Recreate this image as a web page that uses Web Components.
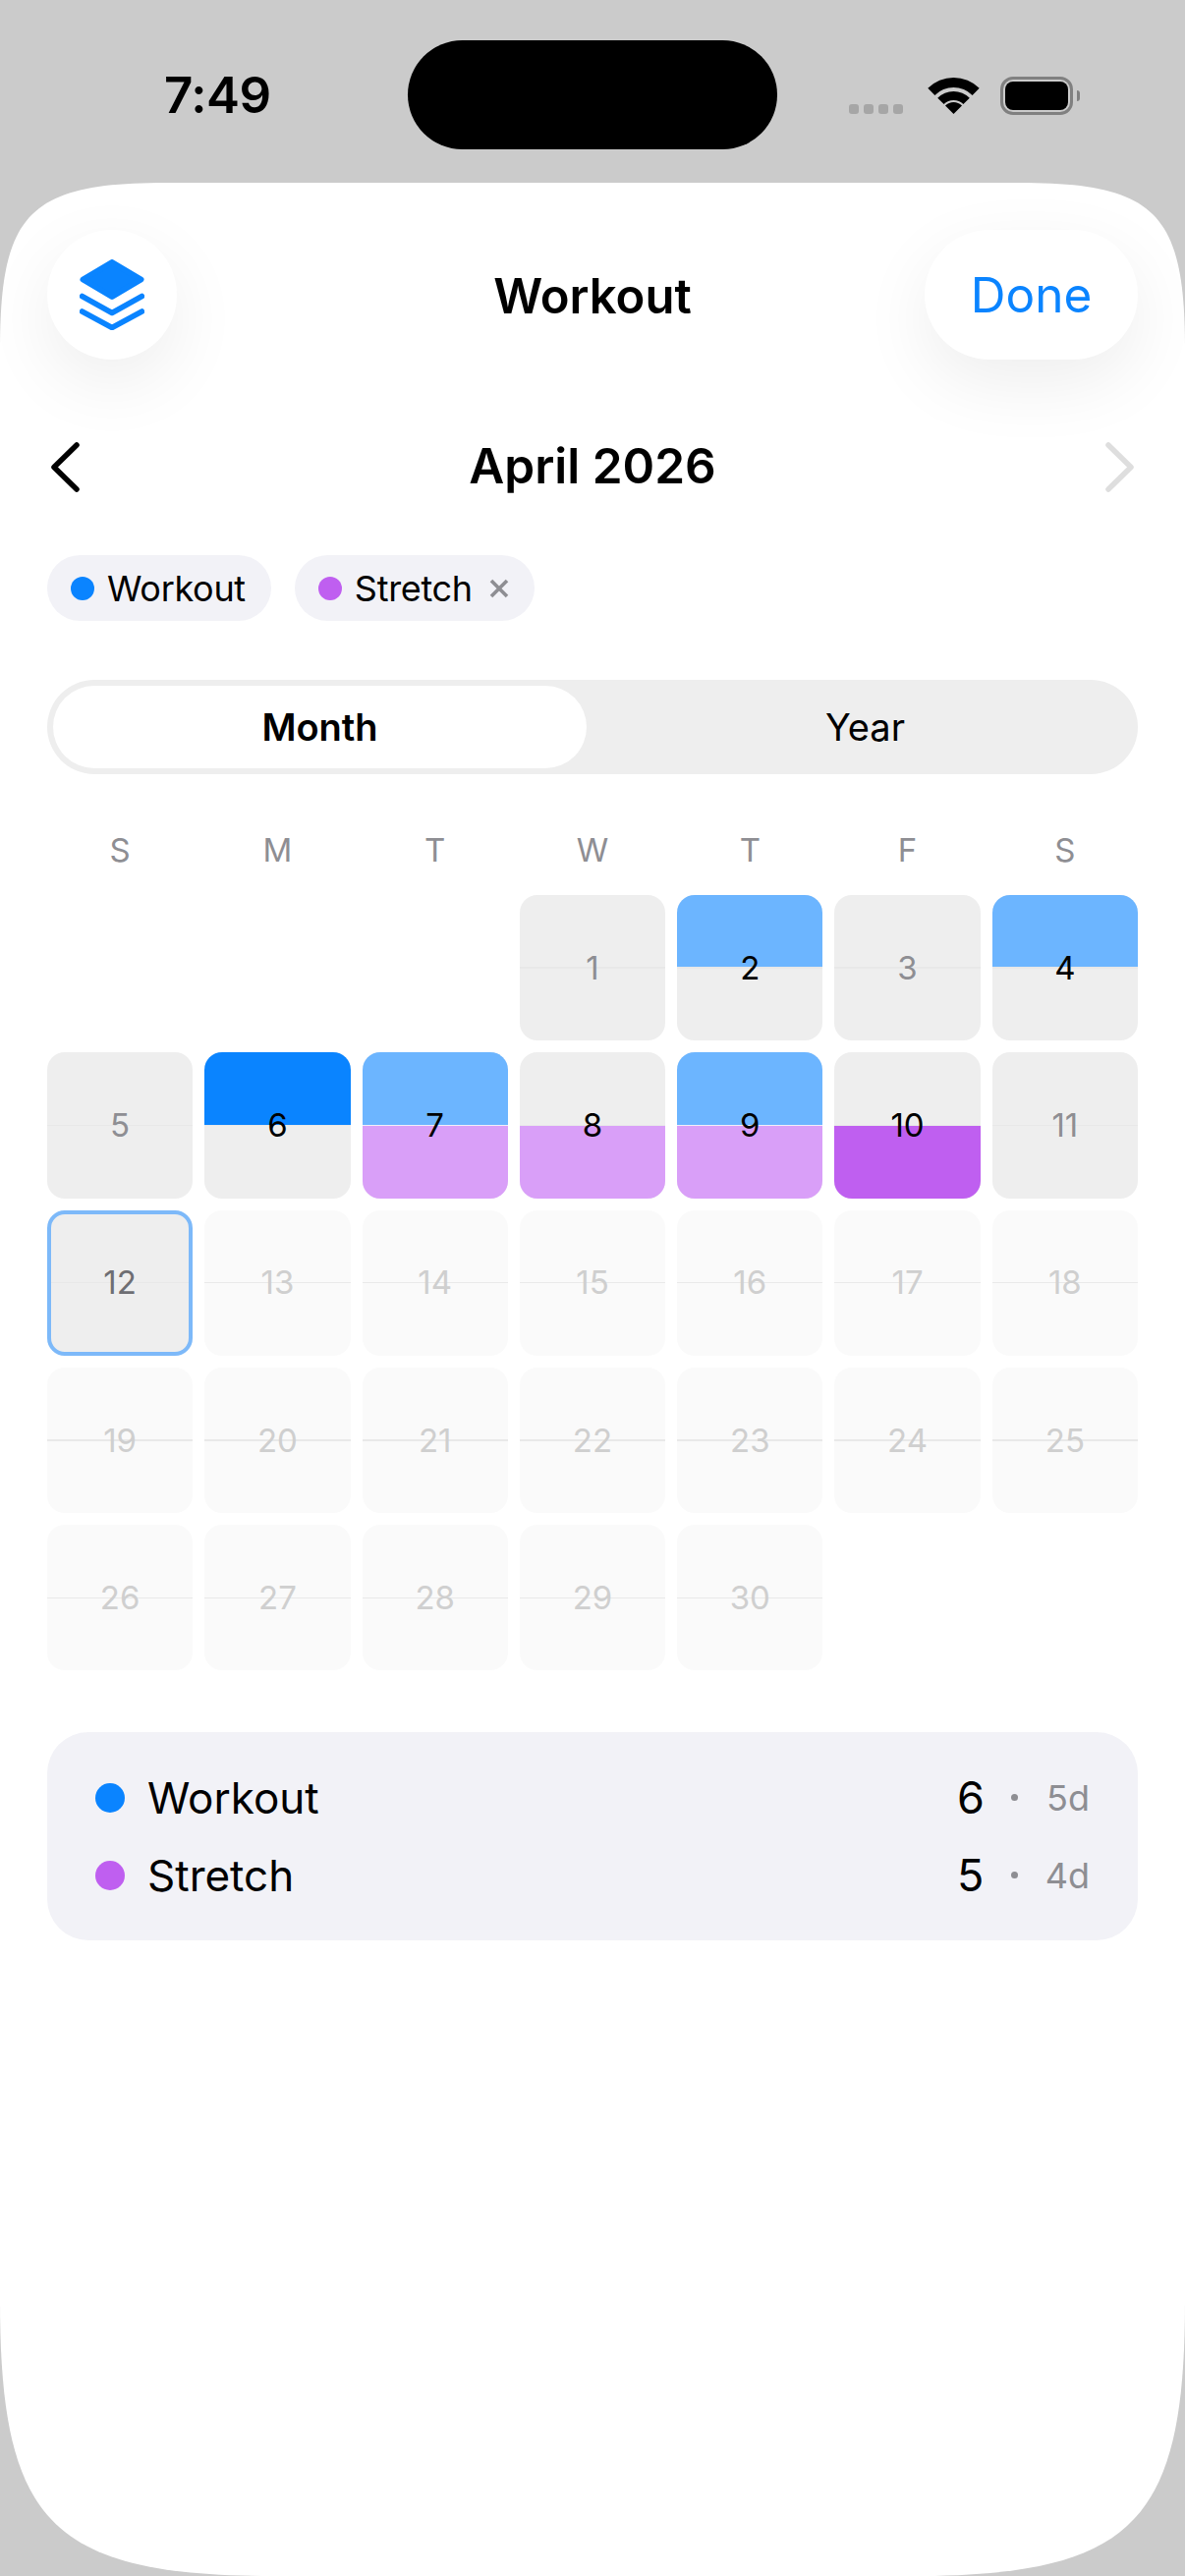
<!DOCTYPE html>
<html lang="en">
<head>
<meta charset="utf-8">
<title>Workout</title>
<style>
  html, body { margin: 0; background: #cbcbcb; }
  body { width: 1206px; height: 2622px; overflow: hidden; font-family: Inter, "Liberation Sans", sans-serif; color: #000; }
</style>
</head>
<body>
<status-bar time="7:49"></status-bar>
<sheet-panel>
  <sheet-header title="Workout" action="Done"></sheet-header>
  <month-nav label="April 2026"></month-nav>
  <chip-row>
    <filter-chip color="#0a84ff">Workout</filter-chip>
    <filter-chip color="#bf5ff0" removable>Stretch</filter-chip>
  </chip-row>
  <segment-switch first="Month" second="Year"></segment-switch>
  <calendar-grid>
    <day-cell></day-cell><day-cell></day-cell><day-cell></day-cell>
    <day-cell day="1" state="past"></day-cell>
    <day-cell day="2" state="past" top="#6cb5ff"></day-cell>
    <day-cell day="3" state="past"></day-cell>
    <day-cell day="4" state="past" top="#6cb5ff"></day-cell>
    <day-cell day="5" state="past"></day-cell>
    <day-cell day="6" state="past" top="#0a84ff"></day-cell>
    <day-cell day="7" state="past" top="#6cb5ff" bottom="#d99ff8"></day-cell>
    <day-cell day="8" state="past" bottom="#d99ff8"></day-cell>
    <day-cell day="9" state="past" top="#6cb5ff" bottom="#d99ff8"></day-cell>
    <day-cell day="10" state="past" bottom="#bf5ff0"></day-cell>
    <day-cell day="11" state="past"></day-cell>
    <day-cell day="12" state="today"></day-cell>
    <day-cell day="13"></day-cell><day-cell day="14"></day-cell><day-cell day="15"></day-cell>
    <day-cell day="16"></day-cell><day-cell day="17"></day-cell><day-cell day="18"></day-cell>
    <day-cell day="19"></day-cell><day-cell day="20"></day-cell><day-cell day="21"></day-cell>
    <day-cell day="22"></day-cell><day-cell day="23"></day-cell><day-cell day="24"></day-cell>
    <day-cell day="25"></day-cell><day-cell day="26"></day-cell><day-cell day="27"></day-cell>
    <day-cell day="28"></day-cell><day-cell day="29"></day-cell><day-cell day="30"></day-cell>
  </calendar-grid>
  <legend-card>
    <legend-row color="#0a84ff" label="Workout" count="6" days="5d"></legend-row>
    <legend-row color="#bf5ff0" label="Stretch" count="5" days="4d"></legend-row>
  </legend-card>
</sheet-panel>

<script>
class StatusBar extends HTMLElement {
  connectedCallback() {
    this.attachShadow({ mode: "open" }).innerHTML = `
    <style>
      :host { display: grid; grid-template-columns: 415px 376px 1fr; height: 186px; box-sizing: border-box; padding-top: 41px; }
      .time { padding-left: 167px; font: 600 51px/112px Inter, sans-serif; letter-spacing: -0.5px; }
      .island { height: 111px; background: #000; border-radius: 56px; }
      .right { display: flex; align-items: flex-start; padding: 37px 0 0 73px; }
      .signal { display: flex; gap: 5px; margin-top: 28px; }
      .signal i { width: 10px; height: 10px; border-radius: 3px; background: #a6a6a6; }
      svg { display: block; overflow: visible; margin: 1px 0 0 26px; }
      .battery { display: flex; align-items: center; margin-left: 22px; }
      .shell { width: 74px; height: 39px; box-sizing: border-box; border: 3px solid #808080; border-radius: 13px; padding: 2px; }
      .shell b { display: block; height: 100%; border-radius: 8px; background: #000; }
      .nub { width: 3px; height: 11px; margin-left: 4px; border-radius: 0 3px 3px 0; background: #808080; }
    </style>
    <div class="time">${this.getAttribute("time")}</div>
    <div class="island"></div>
    <div class="right">
      <div class="signal"><i></i><i></i><i></i><i></i></div>
      <svg width="51" height="37" viewBox="0 0 51 37" fill="#000">
        <path d="M-.7 10.8A37 37 0 0 1 51.7 10.8L44.6 17.9A27 27 0 0 0 6.4 17.9Z"/>
        <path d="M9.2 20.7A23 23 0 0 1 41.8 20.7L35.4 27.1A14 14 0 0 0 15.6 27.1Z"/>
        <path d="M17 28.5A12 12 0 0 1 34 28.5L25.5 37Z"/>
      </svg>
      <div class="battery"><div class="shell"><b></b></div><div class="nub"></div></div>
    </div>`;
  }
}

class SheetPanel extends HTMLElement {
  connectedCallback() {
    this.attachShadow({ mode: "open" }).innerHTML = `
    <style>
      :host { display: block; height: 2436px; box-sizing: border-box; padding: 48px 48px 0; background: #fff;
        clip-path: path("M0 170C0 30 30 0 170 0L1036 0C1176 0 1206 30 1206 170L1206 2156C1206 2383 1153 2436 926 2436L280 2436C53 2436 0 2383 0 2156Z"); }
    </style>
    <slot></slot>`;
  }
}

class SheetHeader extends HTMLElement {
  connectedCallback() {
    this.attachShadow({ mode: "open" }).innerHTML = `
    <style>
      :host { display: grid; grid-template-columns: 1fr auto 1fr; align-items: center; height: 132px; }
      .btn { height: 132px; background: #fff; border-radius: 66px; box-shadow: 0 24px 72px rgba(0,0,0,.07);
        display: flex; align-items: center; justify-content: center; }
      .icon { width: 132px; }
      .done { width: 217px; box-sizing: border-box; padding-top: 2px; justify-self: end; color: #0a84ff; font: 400 49.5px/1 Inter, sans-serif; }
      h1 { margin: 0; padding-top: 2px; font: 570 49px/1 Inter, sans-serif; }
    </style>
    <div class="btn icon">
      <svg width="66" height="72" viewBox="0 0 66 72">
        <polygon points="33,3 62.5,20.5 33,38 3.5,20.5" fill="#0a84ff" stroke="#0a84ff" stroke-width="6" stroke-linejoin="round"/>
        <path d="M2.5 37.5L33 54.5L63.5 37.5M2.5 53L33 69.5L63.5 53" fill="none" stroke="#0a84ff" stroke-width="5.5" stroke-linecap="round" stroke-linejoin="round"/>
      </svg>
    </div>
    <h1>${this.getAttribute("title")}</h1>
    <div class="btn done">${this.getAttribute("action")}</div>`;
  }
}

class MonthNav extends HTMLElement {
  connectedCallback() {
    this.attachShadow({ mode: "open" }).innerHTML = `
    <style>
      :host { display: flex; align-items: center; justify-content: space-between; height: 60px; margin: 79px 4px 0; }
      svg { display: block; fill: none; stroke-width: 5.5; stroke-linecap: round; stroke-linejoin: round; }
      span { font: 570 49.5px/1 Inter, sans-serif; }
    </style>
    <svg width="29" height="51" viewBox="0 0 29 51" stroke="#000"><path d="M26 3L3 25.5L26 48"/></svg>
    <span>${this.getAttribute("label")}</span>
    <svg width="29" height="51" viewBox="0 0 29 51" stroke="#dedede"><path d="M3 3L26 25.5L3 48"/></svg>`;
  }
}

class ChipRow extends HTMLElement {
  connectedCallback() {
    this.attachShadow({ mode: "open" }).innerHTML = `
    <style>:host { display: flex; gap: 24px; margin-top: 60px; }</style>
    <slot></slot>`;
  }
}

class FilterChip extends HTMLElement {
  connectedCallback() {
    const x = this.hasAttribute("removable")
      ? `<svg width="20" height="20" viewBox="0 0 20 20" stroke="#8e8e93" stroke-width="3.6"><path d="M2 2L18 18M18 2L2 18"/></svg>` : "";
    this.attachShadow({ mode: "open" }).innerHTML = `
    <style>
      :host { display: flex; align-items: center; height: 67px; box-sizing: border-box; padding: 0 26px 0 24px; gap: 13px;
        background: #f2f2f7; border-radius: 34px; font: 400 36px/1 Inter, sans-serif; letter-spacing: -0.3px; }
      i { width: 24px; height: 24px; border-radius: 50%; background: ${this.getAttribute("color")}; }
      svg { display: block; margin-left: 4px; }
    </style>
    <i></i><slot></slot>${x}`;
  }
}

class SegmentSwitch extends HTMLElement {
  connectedCallback() {
    this.attachShadow({ mode: "open" }).innerHTML = `
    <style>
      :host { display: grid; grid-template-columns: 1fr 1fr; gap: 12px; height: 96px; box-sizing: border-box; padding: 6px; margin-top: 60px;
        background: #eeeeee; border-radius: 48px; font: 400 38px/1 Inter, sans-serif; }
      div { display: flex; align-items: center; justify-content: center; border-radius: 42px; }
      .on { background: #fff; font-weight: 570; }
    </style>
    <div class="on">${this.getAttribute("first")}</div>
    <div>${this.getAttribute("second")}</div>`;
  }
}

class CalendarGrid extends HTMLElement {
  connectedCallback() {
    const names = ["S", "M", "T", "W", "T", "F", "S"];
    this.attachShadow({ mode: "open" }).innerHTML = `
    <style>
      :host { display: block; margin-top: 57px; }
      .head, .days { display: grid; grid-template-columns: repeat(7, 1fr); gap: 12px; }
      .head { height: 40px; margin-bottom: 26px; align-items: center; text-align: center; color: #8e8e93; font: 400 33px/40px Inter, sans-serif; }
    </style>
    <div class="head">${names.map(n => `<span>${n}</span>`).join("")}</div>
    <div class="days"><slot></slot></div>`;
  }
}

class DayCell extends HTMLElement {
  connectedCallback() {
    const day = this.getAttribute("day");
    const state = this.getAttribute("state") || "future";
    const top = this.getAttribute("top");
    const bottom = this.getAttribute("bottom");
    const ink = top || bottom ? "#000" : { past: "#8e8e93", today: "#6e6e73", future: "#cfcfcf" }[state];
    const bg = state === "future" ? "#fafafa" : "#eeeeee";
    const line = top && bottom ? "#f2eef9" : state === "future" ? "#e9e9e9" : "#e8e8e8";
    this.attachShadow({ mode: "open" }).innerHTML = `
    <style>
      :host { display: grid; aspect-ratio: 1; border-radius: 18px; overflow: hidden; box-sizing: border-box;
        background: ${day ? bg : "transparent"}; ${state === "today" ? "border: 4px solid #7db9f9;" : ""} }
      .fill, .num { grid-area: 1 / 1; }
      .fill { display: grid; grid-template-rows: 1fr 1.4px 1fr; }
      .fill .a { background: ${top || "transparent"}; }
      .fill .b { background: ${bottom || "transparent"}; }
      .fill .l { background: ${line}; }
      .num { display: flex; align-items: center; justify-content: center; color: ${ink}; font: 400 33px/1 Inter, sans-serif; }
    </style>
    ${day ? `<div class="fill"><div class="a"></div><div class="l"></div><div class="b"></div></div><div class="num">${day}</div>` : ""}`;
  }
}

class LegendCard extends HTMLElement {
  connectedCallback() {
    this.attachShadow({ mode: "open" }).innerHTML = `
    <style>
      :host { display: flex; flex-direction: column; gap: 22px; margin-top: 63px; padding: 38px 49px 38px 49px; background: #f2f2f7; border-radius: 42px; }
    </style>
    <slot></slot>`;
  }
}

class LegendRow extends HTMLElement {
  connectedCallback() {
    this.attachShadow({ mode: "open" }).innerHTML = `
    <style>
      :host { display: flex; align-items: center; height: 57px; font: 400 44px/1 Inter, sans-serif; }
      .dot { width: 30px; height: 30px; border-radius: 50%; background: ${this.getAttribute("color")}; margin-right: 23px; }
      .label { flex: 1; }
      .count { width: 55px; font-size: 45px; }
      .sep { width: 7px; height: 7px; border-radius: 50%; background: #8e8e93; }
      .days { width: 73px; text-align: right; color: #8e8e93; font-size: 36px; }
    </style>
    <div class="dot"></div>
    <div class="label">${this.getAttribute("label")}</div>
    <div class="count">${this.getAttribute("count")}</div>
    <div class="sep"></div>
    <div class="days">${this.getAttribute("days")}</div>`;
  }
}

customElements.define("status-bar", StatusBar);
customElements.define("sheet-panel", SheetPanel);
customElements.define("sheet-header", SheetHeader);
customElements.define("month-nav", MonthNav);
customElements.define("chip-row", ChipRow);
customElements.define("filter-chip", FilterChip);
customElements.define("segment-switch", SegmentSwitch);
customElements.define("calendar-grid", CalendarGrid);
customElements.define("day-cell", DayCell);
customElements.define("legend-card", LegendCard);
customElements.define("legend-row", LegendRow);
</script>
</body>
</html>
